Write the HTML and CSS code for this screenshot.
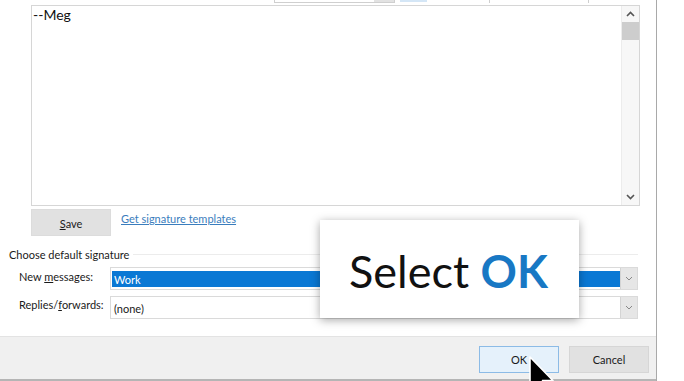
FILE: index.html
```html
<!DOCTYPE html>
<html>
<head>
<meta charset="utf-8">
<link rel="stylesheet" href="styles.css">
</head>
<body>
<div class="screen">
  <div class="dialog">
    <div class="content">
      <div class="strip">
        <div class="strip-combo"><span class="strip-combo-btn"></span></div>
        <div class="strip-blue"></div>
        <div class="strip-sep sep1"></div>
        <div class="strip-sep sep2"></div>
      </div>
      <div class="editor">
        <div class="editor-text">--Meg</div>
        <div class="scrollbar">
          <div class="sb-btn">
            <svg width="9" height="6" viewBox="0 0 9 6"><polyline points="1,5 4.5,1.5 8,5" fill="none" stroke="#555" stroke-width="1.6"/></svg>
          </div>
          <div class="sb-thumb"></div>
          <div class="sb-track"></div>
          <div class="sb-btn">
            <svg width="9" height="6" viewBox="0 0 9 6"><polyline points="1,1 4.5,4.5 8,1" fill="none" stroke="#555" stroke-width="1.6"/></svg>
          </div>
        </div>
      </div>
      <div class="save-row">
        <div class="btn save-btn"><span class="u">S</span>ave</div>
        <a class="link">Get signature templates</a>
      </div>
      <div class="group-title"><span>Choose default signature</span><span class="group-line"></span></div>
      <div class="field-row">
        <div class="label">New <span class="u">m</span>essages:</div>
        <div class="select">
          <div class="value selected">Work</div>
          <div class="arrow"><svg width="8" height="5" viewBox="0 0 8 5"><polyline points="1,1 4,4 7,1" fill="none" stroke="#888" stroke-width="1"/></svg></div>
        </div>
      </div>
      <div class="field-row">
        <div class="label label2">Replies/<span class="u">f</span>orwards:</div>
        <div class="select">
          <div class="value">(none)</div>
          <div class="arrow"><svg width="8" height="5" viewBox="0 0 8 5"><polyline points="1,1 4,4 7,1" fill="none" stroke="#888" stroke-width="1"/></svg></div>
        </div>
      </div>
    </div>
    <div class="footer">
      <div class="btn ok-btn">OK</div>
      <div class="btn cancel-btn">Cancel</div>
    </div>
  </div>
  <div class="backdrop"></div>
</div>
<div class="callout">Select <span class="ok-word">OK</span></div>
<svg class="cursor" width="26" height="40" viewBox="0 0 13 20"><path d="M0.5,0.5 L0.5,17 L4.3,13.3 L7,19.5 L9.4,18.5 L6.8,12.3 L12,12.3 Z" fill="#000" stroke="#fff" stroke-width="0.8" stroke-linejoin="round"/></svg>
</body>
</html>
```

FILE: styles.css
```css
html, body {
  margin: 0;
  padding: 0;
}
body {
  width: 684px;
  height: 381px;
  overflow: hidden;
  background: #fff;
  font-family: Lato, "Noto Sans", sans-serif;
  font-size: 11px;
  color: #1a1a1a;
  position: relative;
}
.screen {
  display: flex;
  height: 381px;
}
.dialog {
  width: 656px;
  flex: none;
  display: flex;
  flex-direction: column;
  border-right: 1px solid #a9a9a9;
  box-shadow: 1px 0 0 #dedede;
}
.backdrop {
  flex: 1;
  background: #fff;
}
.content {
  height: 336px;
  flex: none;
  background: #fff;
  display: flex;
  flex-direction: column;
}
.strip {
  height: 5px;
  flex: none;
  display: flex;
  align-items: flex-start;
}
.strip-combo {
  margin-left: 274px;
  width: 119px;
  height: 2px;
  border: 1px solid #cfcfcf;
  border-top: none;
  display: flex;
  justify-content: flex-end;
}
.strip-combo-btn {
  width: 20px;
  height: 2px;
  background: #e2e2e2;
}
.strip-blue {
  margin-left: 5px;
  width: 27px;
  height: 2px;
  background: #d4e6f6;
}
.strip-sep {
  width: 1px;
  height: 3px;
  background: #cfcfcf;
}
.sep1 { margin-left: 62px; }
.sep2 { margin-left: 98px; }

.editor {
  margin-left: 31px;
  width: 609px;
  height: 201px;
  box-sizing: border-box;
  border: 1px solid #d6d6d6;
  display: flex;
  flex: none;
}
.editor-text {
  flex: 1;
  padding: 0 1px;
  font-size: 14px;
  line-height: 17px;
  color: #111;
}
.scrollbar {
  width: 17px;
  display: flex;
  flex-direction: column;
  background: #f7f7f7;
  border-left: 1px solid #ececec;
}
.sb-btn {
  height: 16px;
  display: flex;
  align-items: center;
  justify-content: center;
}
.sb-thumb {
  height: 18px;
  background: #cdcdcd;
}
.sb-track {
  flex: 1;
}

.save-row {
  margin-top: 3px;
  margin-left: 31px;
  height: 27px;
  display: flex;
  align-items: flex-start;
  flex: none;
}
.btn {
  width: 80px;
  box-sizing: border-box;
  display: flex;
  align-items: center;
  justify-content: center;
  font-size: 12px;
  color: #1a1a1a;
}
.save-btn {
  height: 27px;
  background: #e1e1e1;
  border: 1px solid #dcdcdc;
  padding-top: 2px;
}
.u {
  text-decoration: underline;
}
.link {
  margin-left: 10px;
  margin-top: 3px;
  color: #3a7dbd;
  text-decoration: underline;
  font-size: 11px;
}
.group-title {
  margin-top: 10px;
  margin-left: 9px;
  height: 16px;
  display: flex;
  align-items: center;
  flex: none;
  font-size: 11px;
}
.group-line {
  flex: 1;
  height: 1px;
  background: #ececec;
  margin-left: 4px;
  margin-right: 18px;
}
.field-row {
  display: flex;
  align-items: flex-start;
  flex: none;
  margin-top: 6px;
}
.group-title + .field-row {
  margin-top: 5px;
}
.label {
  width: 110px;
  flex: none;
  white-space: nowrap;
  box-sizing: border-box;
  padding-left: 19px;
  padding-top: 2px;
  font-size: 11px;
  line-height: 16px;
}
.label2 {
  padding-top: 1px;
}
.select {
  width: 528px;
  height: 23px;
  flex: none;
  box-sizing: border-box;
  border: 1px solid #dadada;
  display: flex;
  background: #fff;
}
.value {
  flex: 1;
  margin: 3px 0 2px 1px;
  padding-left: 2px;
  display: flex;
  align-items: center;
  font-size: 11px;
  padding-top: 1px;
}
.value.selected {
  background: #0a78d4;
  color: #fff;
}
.arrow {
  width: 16px;
  background: #e6e6e6;
  border-left: 1px solid #d4d4d4;
  display: flex;
  align-items: center;
  justify-content: center;
}

.footer {
  flex: 1;
  background: #f0f0f0;
  border-top: 1px solid #e3e3e3;
  border-bottom: 2px solid #b5b5b5;
  display: flex;
  justify-content: flex-end;
  align-items: flex-start;
  gap: 10px;
  padding: 9px 7px 0 0;
}
.ok-btn,
.cancel-btn {
  height: 27px;
  font-size: 11px;
}
.ok-btn {
  background: #e5f1fb;
  border: 1px solid #8cbbe6;
}
.cancel-btn {
  background: #e1e1e1;
  border: 1px solid #d6d6d6;
}
.save-btn {
  font-size: 11px;
}

.callout {
  position: absolute;
  left: 320px;
  top: 220px;
  width: 259px;
  height: 98px;
  box-sizing: border-box;
  padding: 4px 0 0 29px;
  background: #fff;
  box-shadow: 0 2px 9px rgba(0, 0, 0, 0.35);
  display: flex;
  align-items: center;
  font-size: 45px;
  line-height: 56px;
  color: #111;
  white-space: pre;
}
.ok-word {
  color: #1878c4;
  font-weight: 700;
}
.cursor {
  position: absolute;
  left: 529px;
  top: 356px;
}
```
